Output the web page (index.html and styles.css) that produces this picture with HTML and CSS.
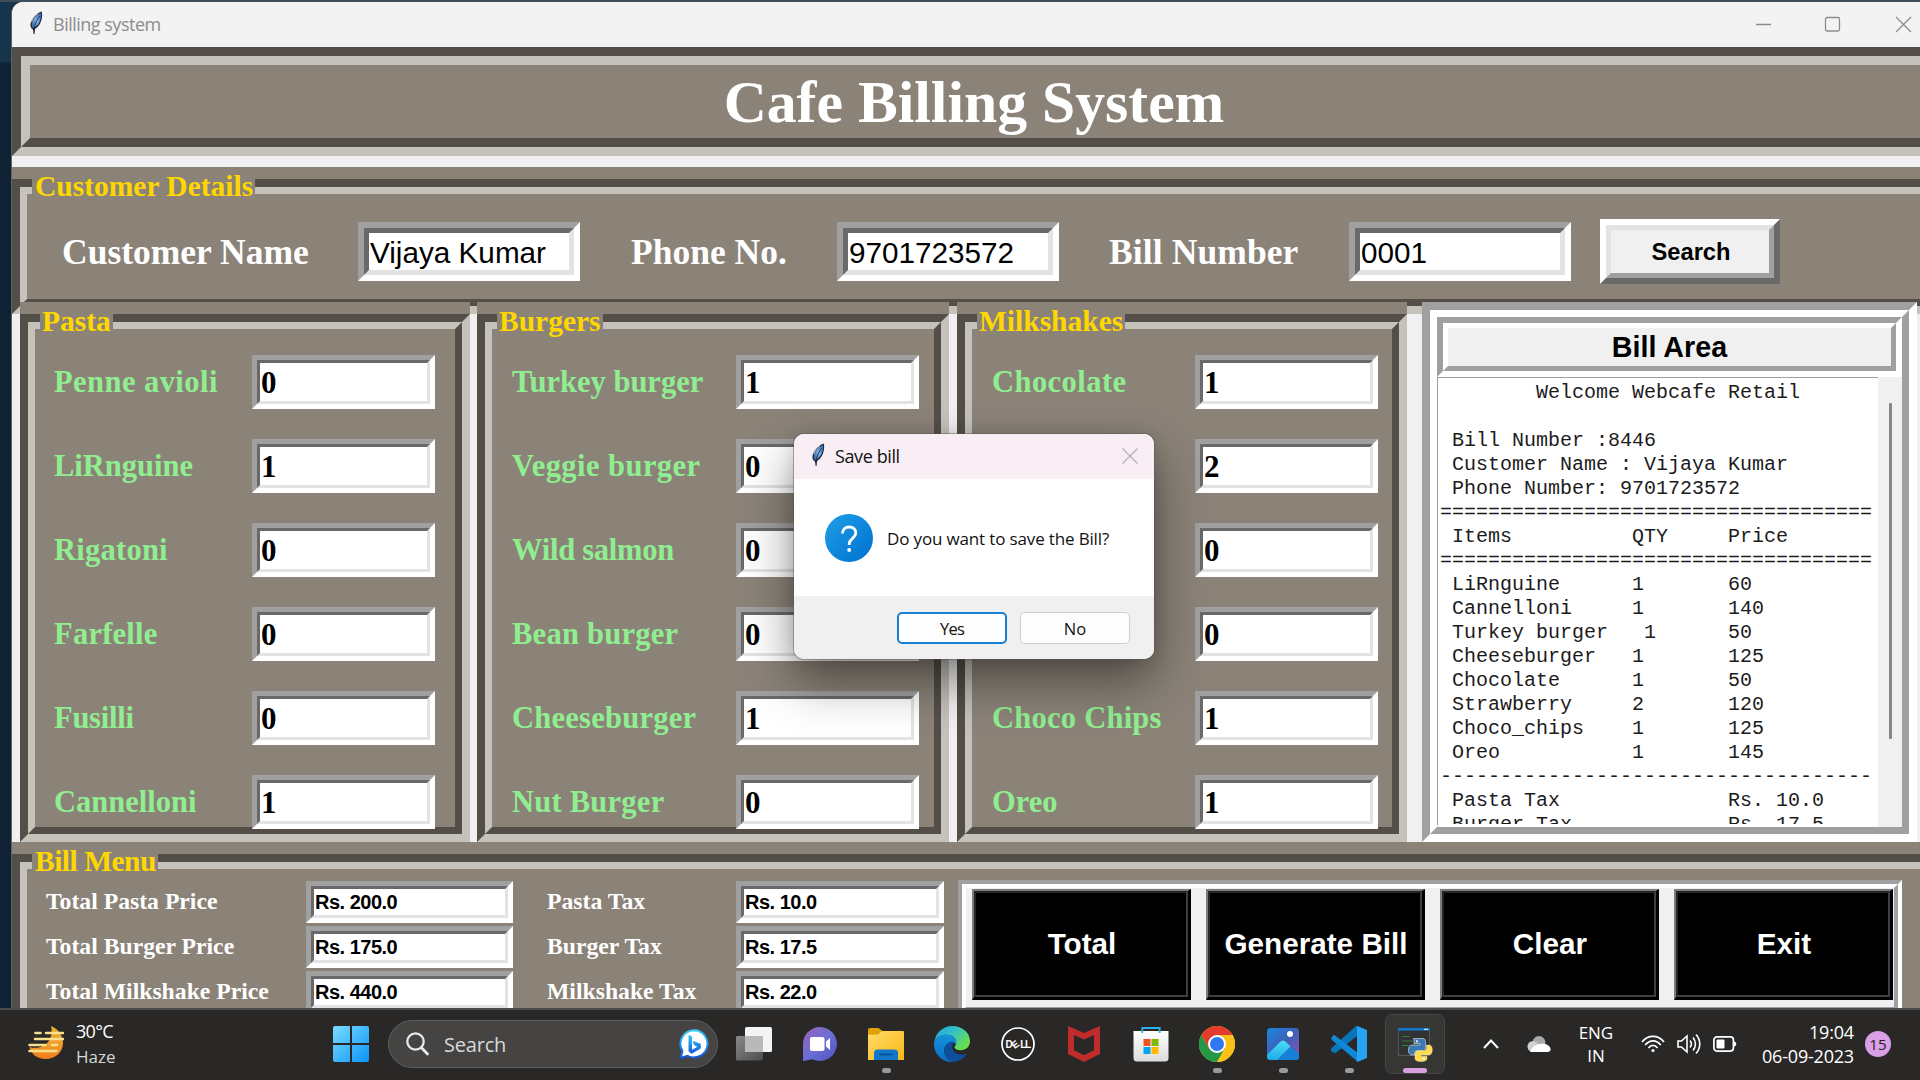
FILE: index.html
```html
<!DOCTYPE html>
<html lang="en">
<head>
<meta charset="utf-8">
<title>Billing system</title>
<link rel="stylesheet" href="styles.css">
</head>
<body>
<svg width="0" height="0" class="defs">
  <defs>
    <linearGradient id="gFeather" x1="1" y1="0" x2="0" y2="1"><stop offset="0" stop-color="#2a5fb0"/><stop offset=".5" stop-color="#7fb2ec"/><stop offset="1" stop-color="#2a559c"/></linearGradient>
    <linearGradient id="gQuestion" x1="0" y1="0" x2="1" y2="1"><stop offset="0" stop-color="#1f9fe6"/><stop offset="1" stop-color="#0070d0"/></linearGradient>
    <linearGradient id="gMoon" x1="0" y1="0" x2="0" y2="1"><stop offset="0" stop-color="#e0b030"/><stop offset=".5" stop-color="#f0a02c"/><stop offset="1" stop-color="#f07d1c"/></linearGradient>
    <linearGradient id="gWin" x1="0" y1="0" x2="1" y2="1"><stop offset="0" stop-color="#7bdcff"/><stop offset="1" stop-color="#0a94f8"/></linearGradient>
    <linearGradient id="gBing" x1="0" y1="0" x2="0" y2="1"><stop offset="0" stop-color="#35c8f5"/><stop offset="1" stop-color="#1256d8"/></linearGradient>
    <linearGradient id="gChat" x1="0" y1="0" x2="1" y2="1"><stop offset="0" stop-color="#9a63b4"/><stop offset=".5" stop-color="#6b6fd6"/><stop offset="1" stop-color="#4f53c4"/></linearGradient>
    <linearGradient id="gFolder" x1="0" y1="0" x2="1" y2="1"><stop offset="0" stop-color="#ffda68"/><stop offset="1" stop-color="#f9b916"/></linearGradient>
    <linearGradient id="gEdgeTop" x1="0" y1="0" x2="1" y2=".6"><stop offset="0" stop-color="#1f9fe6"/><stop offset=".5" stop-color="#35c1c8"/><stop offset="1" stop-color="#69e04c"/></linearGradient>
    <linearGradient id="gEdgeLow" x1="0" y1="0" x2="0" y2="1"><stop offset="0" stop-color="#1593dc"/><stop offset="1" stop-color="#0c6cc4"/></linearGradient>
    <linearGradient id="gPhoto" x1="0" y1="0" x2="1" y2="1"><stop offset="0" stop-color="#1a86e0"/><stop offset=".5" stop-color="#3f5fb8"/><stop offset="1" stop-color="#9a4fb4"/></linearGradient>
    <linearGradient id="gPeak" x1="0" y1="0" x2="0" y2="1"><stop offset="0" stop-color="#4fdcf6"/><stop offset="1" stop-color="#12a4e4"/></linearGradient>
    <linearGradient id="gTask" x1="0" y1="0" x2="1" y2="1"><stop offset="0" stop-color="#8a8a8a"/><stop offset="1" stop-color="#4c4c4c"/></linearGradient>
    <linearGradient id="gStore" x1="0" y1="0" x2="0" y2="1"><stop offset="0" stop-color="#ffffff"/><stop offset="1" stop-color="#dcdcdc"/></linearGradient>
    <symbol id="feather" viewBox="0 0 14 24">
      <path d="M12.600.600C8 2 3 7 1.600 12.500 1 15.500 2 17.500 4 18.500L4.600 23 5.600 23 6 18C9.500 16 12 12 12.800 7.500 13.200 5 13.400 2.500 12.600.600z" fill="#222c3c"/>
      <path d="M12 2C8 4 4 8 3 12.500 2.700 14.500 3 16 4 17 7.500 16 10.500 12 11.400 8 11.900 5.500 12.200 4 12 2z" fill="url(#gFeather)"/>
      <path d="M10.500 5C8 9 5.500 13 5 20" fill="none" stroke="#10203a" stroke-width=".8"/>
      <path d="M2.600 11C4 7.500 6 5 9 2.800" fill="none" stroke="#c9ced4" stroke-width=".9"/>
    </symbol>
  </defs>
</svg>

<main class="window">
  <header class="titlebar">
    <svg class="feather" width="14" height="24"><use href="#feather"/></svg>
    <span class="title">Billing system</span>
    <svg class="controls" width="160" height="20" viewBox="0 0 160 20" fill="none" stroke="#8c8c8c" stroke-width="1.300">
      <path d="M1 10.500h15"/><rect x="70.500" y="3.500" width="14" height="13.500" rx="1.500"/><path d="M141 3l15 15M156 3l-15 15"/>
    </svg>
  </header>

  <section class="banner"><div class="banner-in">Cafe Billing System</div></section>

  <section class="group customer">
    <h2 class="legend">Customer Details</h2>
    <div class="groove"><div class="groove-in customer-row">
      <span class="name-label first">Customer Name</span>
      <div class="entry big"><span>Vijaya Kumar</span></div>
      <span class="name-label phone">Phone No.</span>
      <div class="entry big"><span>9701723572</span></div>
      <span class="name-label bill">Bill Number</span>
      <div class="entry big"><span>0001</span></div>
      <div class="search-btn"><span>Search</span></div>
    </div></div>
  </section>

  <section class="panels">
    <div class="group pasta">
      <h2 class="legend">Pasta</h2>
      <div class="groove"><div class="groove-in items">
        <span class="item wide">Penne avioli</span><div class="entry qty"><span>0</span></div>
        <span class="item">LiRnguine</span><div class="entry qty"><span>1</span></div>
        <span class="item loose">Rigatoni</span><div class="entry qty"><span>0</span></div>
        <span class="item loose">Farfelle</span><div class="entry qty"><span>0</span></div>
        <span class="item tight">Fusilli</span><div class="entry qty"><span>0</span></div>
        <span class="item">Cannelloni</span><div class="entry qty"><span>1</span></div>
      </div></div>
    </div>
    <div class="group burgers">
      <h2 class="legend">Burgers</h2>
      <div class="groove"><div class="groove-in items">
        <span class="item">Turkey burger</span><div class="entry qty"><span>1</span></div>
        <span class="item wide">Veggie burger</span><div class="entry qty"><span>0</span></div>
        <span class="item tight">Wild salmon</span><div class="entry qty"><span>0</span></div>
        <span class="item loose">Bean burger</span><div class="entry qty"><span>0</span></div>
        <span class="item loose">Cheeseburger</span><div class="entry qty"><span>1</span></div>
        <span class="item loose">Nut Burger</span><div class="entry qty"><span>0</span></div>
      </div></div>
    </div>
    <div class="group shakes">
      <h2 class="legend">Milkshakes</h2>
      <div class="groove"><div class="groove-in items">
        <span class="item wide">Chocolate</span><div class="entry qty"><span>1</span></div>
        <span class="item"></span><div class="entry qty"><span>2</span></div>
        <span class="item"></span><div class="entry qty"><span>0</span></div>
        <span class="item"></span><div class="entry qty"><span>0</span></div>
        <span class="item loose">Choco Chips</span><div class="entry qty"><span>1</span></div>
        <span class="item">Oreo</span><div class="entry qty"><span>1</span></div>
      </div></div>
    </div>
    <div class="bill-area"><div class="bill-in">
      <div class="bill-head"><div class="bill-head-in">Bill Area</div></div>
      <div class="bill-body">
<pre class="receipt">        Welcome Webcafe Retail

 Bill Number :8446
 Customer Name : Vijaya Kumar
 Phone Number: 9701723572
====================================
 Items          QTY     Price
====================================
 LiRnguine      1       60
 Cannelloni     1       140
 Turkey burger   1      50
 Cheeseburger   1       125
 Chocolate      1       50
 Strawberry     2       120
 Choco_chips    1       125
 Oreo           1       145
------------------------------------
 Pasta Tax              Rs. 10.0
 Burger Tax             Rs. 17.5</pre>
        <div class="scrollbar"><div class="thumb"></div></div>
      </div>
    </div></div>
  </section>

  <section class="group menu">
    <h2 class="legend">Bill Menu</h2>
    <div class="groove"><div class="groove-in menu-row">
      <div class="totals">
        <span class="total">Total Pasta Price</span><div class="entry sum"><span>Rs. 200.0</span></div>
        <span class="total tax">Pasta Tax</span><div class="entry sum"><span>Rs. 10.0</span></div>
        <span class="total">Total Burger Price</span><div class="entry sum"><span>Rs. 175.0</span></div>
        <span class="total tax">Burger Tax</span><div class="entry sum"><span>Rs. 17.5</span></div>
        <span class="total">Total Milkshake Price</span><div class="entry sum"><span>Rs. 440.0</span></div>
        <span class="total tax">Milkshake Tax</span><div class="entry sum"><span>Rs. 22.0</span></div>
      </div>
      <div class="actions"><div class="actions-in">
        <div class="action"><span>Total</span></div>
        <div class="action"><span>Generate Bill</span></div>
        <div class="action"><span>Clear</span></div>
        <div class="action"><span>Exit</span></div>
      </div></div>
    </div></div>
  </section>
</main>

<div class="dialog">
  <div class="dialog-title">
    <svg width="14" height="24"><use href="#feather"/></svg>
    <span>Save bill</span>
    <svg class="dialog-close" width="16" height="16" viewBox="0 0 16 16" stroke="#b9b2b6" stroke-width="1.400"><path d="M.500.500l15 15M15.500.500l-15 15"/></svg>
  </div>
  <div class="dialog-body">
    <svg width="48" height="48" viewBox="0 0 48 48"><circle cx="24" cy="24" r="24" fill="url(#gQuestion)"/><path d="M17.500 19.500c0-4 2.800-6.500 6.700-6.500s6.600 2.400 6.600 6c0 5.200-6.600 5.500-6.600 11v1" fill="none" stroke="#fff" stroke-width="2.800"/><circle cx="24.200" cy="36" r="2" fill="#fff"/></svg>
    <span>Do you want to save the Bill?</span>
  </div>
  <div class="dialog-foot"><div class="dbtn yes">Yes</div><div class="dbtn">No</div></div>
</div>

<footer class="taskbar">
  <div class="weather">
    <svg width="36" height="34" viewBox="0 0 36 34"><path d="M23 0c7 3 12 9 12 17 0 9-7.500 16-17.500 16C9 33 3 28 1.500 21c9 3 19.500-2 21.500-11 .8-3.500.800-7 0-10z" fill="url(#gMoon)"/><path d="M7.500 7h5M18 7h17M7 13h28M1.500 19h16M24 19h5M1.500 25h27" stroke="#f8df8c" stroke-width="2.600" stroke-linecap="round"/></svg>
    <div class="weather-text"><span class="temp">30°C</span><span class="haze">Haze</span></div>
  </div>
  <svg class="start" width="36" height="36" viewBox="0 0 36 36"><path d="M2 0h15v17H0V2a2 2 0 0 1 2-2zM19 0h15a2 2 0 0 1 2 2v15H19zM0 19h17v17H2a2 2 0 0 1-2-2zM19 19h17v15a2 2 0 0 1-2 2H19z" fill="url(#gWin)"/></svg>
  <div class="search">
    <svg width="23" height="24" viewBox="0 0 23 24" fill="none" stroke="#e8e8e8" stroke-width="2.300"><circle cx="9.500" cy="9.500" r="8.200"/><path d="M15.500 15.800l6 6.200" stroke-linecap="round" stroke-width="2.800"/></svg>
    <span>Search</span>
    <svg class="bing" width="30" height="30" viewBox="0 0 30 30"><path d="M15 1.200a13.600 13.600 0 1 1-6.500 25.600L1.500 29l2-7A13.600 13.600 0 0 1 15 1.200z" fill="#fff" stroke="url(#gBing)" stroke-width="2"/><path d="M10 6.500l2.500 1v14l6.800-3.600-4-2.200-1-3.200 7 2.600v4.200l-8.800 5-2.500-2z" fill="url(#gBing)" stroke="url(#gBing)" stroke-width="1" stroke-linejoin="round"/></svg>
  </div>
  <div class="apps">
    <div class="app"><svg viewBox="0 0 36 36"><rect x="9" y="1" width="27" height="25" rx="1.500" fill="#f4f4f4"/><rect x="0" y="10" width="27" height="24.500" rx="1.500" fill="url(#gTask)"/><rect x="9" y="10" width="18" height="16" fill="#b9b9b9"/></svg></div>
    <div class="app"><svg viewBox="0 0 36 36"><path d="M18 1a17 17 0 1 1-7.500 32.300L1 35V19A17 17 0 0 1 18 1z" fill="url(#gChat)"/><rect x="8" y="11" width="14.500" height="14" rx="2" fill="#fff"/><path d="M24 15.500l4-3.500v12l-4-3.500z" fill="#fff"/></svg></div>
    <div class="app open"><svg viewBox="0 0 36 36"><path d="M0 4a2 2 0 0 1 2-2h8.500l4 3v5H0z" fill="#e0a008"/><path d="M0 8.500h10l4-3.500H35a1 1 0 0 1 1 1v28H0z" fill="url(#gFolder)"/><path d="M6 34v-7a3.500 3.500 0 0 1 3.500-3.500h17A3.500 3.500 0 0 1 30 27v7z" fill="#1277c8"/><path d="M12 28.500h12" stroke="#0b4a8a" stroke-width="1.600" stroke-linecap="round"/></svg></div>
    <div class="app"><svg viewBox="0 0 36 36"><path d="M.300 16C1.500 7 8.500 0 18.500 0 28.500 0 36 7 36 15.200c0 5.200-4 9-9 9-4 0-6.500-1.500-6.500-3 0-1.200 1.700-1.800 1.700-5 0-4-4-7.500-9.500-7.500C7 8.700 2.500 11 .300 16z" fill="url(#gEdgeTop)"/><path d="M.200 16C2.500 11 7 8.700 12.700 8.700c5.500 0 9.500 3.200 9.500 7.300 0 .8-.100 1.400-.300 2C15 13.500 9 20 10.500 27c.8 4 4 7.600 8.500 9C8 36.600 0 28 0 18.500z" fill="url(#gEdgeLow)"/><path d="M10.400 27C9 20 14 14.500 20 16c-4.500 5.500-.500 12.500 7.500 12.500 2 0 3.600-.500 5.500-1.500-3 5.500-8.500 9-14 9-4.500-1.500-7.800-5-8.600-9z" fill="#0d4f9c"/></svg></div>
    <div class="app"><svg viewBox="0 0 36 36"><circle cx="18" cy="18" r="16" fill="none" stroke="#fff" stroke-width="1.700"/><text x="5.500" y="21.500" class="dell">D</text><text x="0" y="0" class="dell" transform="translate(14.800 23.200) rotate(-38)">E</text><text x="20.200" y="21.500" class="dell">L</text><text x="25" y="21.500" class="dell">L</text></svg></div>
    <div class="app"><svg viewBox="0 0 36 36"><path d="M2 0l16 7 16-7v28l-16 8-16-8zM8 9v15.300l10 5 10-5V9l-10 4.600z" fill="#c02c2c" fill-rule="evenodd"/></svg></div>
    <div class="app"><svg viewBox="0 0 36 36"><path d="M.500 5h35v27a3.500 3.500 0 0 1-3.500 3.500H4A3.500 3.500 0 0 1 .500 32z" fill="url(#gStore)"/><path d="M9.300 7V2h17.400v5" fill="none" stroke="#26b0ee" stroke-width="1.800"/><path d="M10.500 13h7v7h-7z" fill="#f25022"/><path d="M18.500 13h7v7h-7z" fill="#7fba00"/><path d="M10.500 21h7v7h-7z" fill="#00a4ef"/><path d="M18.500 21h7v7h-7z" fill="#ffb900"/></svg></div>
    <div class="app open"><svg viewBox="0 0 36 36"><circle cx="18" cy="18" r="18" fill="#fbc116"/><path d="M2.400 9A18 18 0 0 1 33.600 9H18z" fill="#e33b2e"/><path d="M2.400 9a18 18 0 0 0 15.600 27l7.800-13.500L18 18 10.200 22.500z" fill="#249847"/><path d="M2.400 9L10.200 22.500 18 9z" fill="#e33b2e"/><path d="M33.600 9H18l7.800 13.500L18 36A18 18 0 0 0 33.600 9z" fill="#fbc116"/><circle cx="18" cy="18" r="9" fill="#fff"/><circle cx="18" cy="18" r="7" fill="#3078ee"/></svg></div>
    <div class="app open"><svg viewBox="0 0 36 36"><clipPath id="cp"><rect x="2" y="2" width="32" height="32" rx="3.500"/></clipPath><g clip-path="url(#cp)"><rect x="2" y="2" width="32" height="32" fill="url(#gPhoto)"/><path d="M8 38l16-16 3-1 10 10v8z" fill="#1580d6"/><path d="M0 31l15-15c2-2 4-2 6 0l4.500 4.500L8 38z" fill="url(#gPeak)"/></g><circle cx="25" cy="8" r="3" fill="#fff"/></svg></div>
    <div class="app open"><svg viewBox="0 0 36 36"><path d="M26 0v10L4 27.500 0 25v-2.500L25 0z" fill="#0a74b8"/><path d="M0 12l3-3.200L27 27v9L1 14z" fill="#1088d8"/><path d="M26 0l10 4v28l-10 4z" fill="#27a3f4"/></svg></div>
    <div class="app active"><svg viewBox="0 0 36 36"><rect x="1.500" y="2.500" width="31" height="27" fill="#303234" stroke="#55585a"/><path d="M1 2h32v2.600H1z" fill="#1475c8"/><path d="M27 3.300h4" stroke="#fff" stroke-width="1"/><path d="M5 10.500h8M5 15h11M5 19.500h7" stroke="#2f7d34" stroke-width="1.200"/><path d="M16.500 12.500h9c2 0 3 1.200 3 3v6c0 2-1 3-3 3h-5c-2 0-3 1-3 3v1.500h-2.500c-2.500 0-3.500-2-3.500-5s1.200-5 3.500-5h8v-1.500h-6v-3z" fill="#3b7ab5" stroke="#e8e8e8" stroke-width=".6"/><path d="M29.500 19H32c2.400 0 3.300 2 3.300 5s-1.200 5-3.500 5H24v1.300h6v2c0 2-1.500 3.200-6 3.200s-6-1.200-6-3.200v-4.500c0-2 1-3 3-3h5.500c2 0 3-1.200 3-3z" fill="#ffdc4e" stroke="#e8e8e8" stroke-width=".4"/><circle cx="20" cy="15.300" r="1.100" fill="#fff"/><circle cx="26.500" cy="32.500" r="1.100" fill="#fff"/></svg></div>
  </div>
  <div class="tray">
    <svg class="chev" width="16" height="12" viewBox="0 0 16 12" fill="none" stroke="#fff" stroke-width="2"><path d="M1 10l7-7.500 7 7.500"/></svg>
    <svg class="cloud" width="24" height="18" viewBox="0 0 24 18"><circle cx="12" cy="7.500" r="6.500" fill="#a9a9a9"/><circle cx="6" cy="11.500" r="5.500" fill="#cfcfcf"/><path d="M3 16.500C5 12 9 9.500 12 9c5-.500 7-.500 10 2 2.500 2.500 2 6-1.500 6H6c-1.200 0-2 0-3-.500z" fill="#fff"/></svg>
    <div class="lang"><span>ENG</span><span>IN</span></div>
    <svg class="wifi" width="24" height="20" viewBox="0 0 24 20" fill="none" stroke="#fff" stroke-width="1.700"><path d="M1 8c6-7.500 16-7.500 22 0M4.200 11c4.400-5.600 11.200-5.600 15.600 0M7.500 14c2.600-3.500 6.400-3.500 9 0"/><circle cx="12" cy="16.500" r="1.600" fill="#fff" stroke="none"/></svg>
    <svg class="vol" width="24" height="22" viewBox="0 0 24 22" fill="none" stroke="#fff" stroke-width="1.600"><path d="M1 8v6h3.500l5.500 5V3L4.500 8z"/><path d="M13 7.500c1.600 2 1.600 5 0 7M16 4.500c3.200 3.800 3.200 9.200 0 13M19 1.500c5 5.500 5 13.500 0 19"/></svg>
    <svg class="batt" width="24" height="16" viewBox="0 0 24 16"><rect x=".900" y=".900" width="19.500" height="14.200" rx="3" fill="none" stroke="#fff" stroke-width="1.700"/><rect x="3.500" y="3.500" width="8" height="9" rx="1" fill="#fff"/><path d="M21 5.500c3 .5 3 4.500 0 5z" fill="#fff"/></svg>
    <div class="clock"><span>19:04</span><span>06-09-2023</span></div>
    <div class="badge">15</div>
  </div>
</footer>
</body>
</html>
```
FILE: styles.css
```css
* { box-sizing: border-box; }

body {
  margin: 0;
  width: 1920px;
  height: 1080px;
  overflow: hidden;
  position: relative;
  background: linear-gradient(#16344a 0 62px, #0f2233 63px);
  border-top: 2px solid #3f505c;
  font-family: "Open Sans", "Noto Sans", sans-serif;
}

.defs { display: block; position: absolute; }

/* ---- application window ---- */
.window {
  margin-left: 11px;
  width: 1909px;
  height: 1006px;
  overflow: hidden;
  background: #f0f0f0;
  border-left: 1px solid #59636a;
  border-top-left-radius: 12px;
}

.titlebar {
  height: 45px;
  background: #f3f3f3;
  display: flex;
  align-items: center;
  padding: 0 0 2px 17px;
}
.titlebar .feather { margin-top: -2px; }
.title {
  margin-left: 10px;
  font-size: 18px;
  letter-spacing: -0.5px;
  color: #8c8c8c;
}
.controls { margin-left: auto; margin-right: 5px; }

.banner {
  width: 1926px;
  height: 109px;
  margin-bottom: 11px;
  border: 9px solid;
  border-color: #534f48 #c5c1bb #c5c1bb #534f48;
}
.banner-in {
  height: 91px;
  border: 9px solid;
  border-color: #c5c1bb #534f48 #534f48 #c5c1bb;
  background: #8b8378;
  color: #fff;
  font: bold 59.700px/74px "Liberation Serif", serif;
  text-align: center;
  padding-right: 2px;
}

/* label frames */
.group {
  position: relative;
  background: #8b8378;
  padding-top: 12px;
  display: flex;
  flex: none;
}
.groove {
  flex: 1;
  display: flex;
  border: 8px solid;
  border-color: #534f48 #c5c1bb #c5c1bb #534f48;
}
.groove-in {
  flex: 1;
  border: 7px solid;
  border-color: #c5c1bb #534f48 #534f48 #c5c1bb;
}
.legend {
  position: absolute;
  left: 20px;
  top: 4px;
  margin: 0;
  padding: 0 2px 0 3px;
  background: #8b8378;
  color: gold;
  font: bold 29.500px/30px "Liberation Serif", serif;
}
.panels .legend { padding-left: 2px; }
.menu .legend { letter-spacing: -0.5px; }

/* sunken text entries */
.entry {
  border: 5px solid;
  border-color: #a0a0a0 #fff #fff #a0a0a0;
  display: flex;
}
.entry span {
  flex: 1;
  border: 3px solid;
  border-color: #696969 #e3e3e3 #e3e3e3 #696969;
  background: #fff;
  color: #000;
  white-space: nowrap;
}

.customer { width: 1926px; height: 147px; }
.customer-row { display: flex; align-items: center; padding: 10px 0 0 35px; }
.name-label { color: #fff; font: bold 35.500px/40px "Liberation Serif", serif; }
.name-label.first { width: 296px; }
.name-label.phone { width: 257px; padding-left: 51px; }
.name-label.bill { width: 290px; padding-left: 50px; letter-spacing: 0.1px; }
.entry.big { width: 222px; height: 59px; border-width: 6px; }
.entry.big span {
  border-width: 5px;
  padding-left: 1px;
  font: 29.700px/39px "Liberation Sans", sans-serif;
}
.search-btn {
  width: 180px;
  height: 65px;
  margin-left: 29px;
  border: 6px solid;
  border-color: #fff #696969 #696969 #fff;
  display: flex;
}
.search-btn span {
  flex: 1;
  border: 5px solid;
  border-color: #e3e3e3 #a0a0a0 #a0a0a0 #e3e3e3;
  background: #f0f0f0;
  color: #000;
  font: bold 23.700px/44px "Liberation Sans", sans-serif;
  text-align: center;
  padding-left: 2px;
}

.panels {
  position: relative;
  display: flex;
  height: 540px;
  margin-top: -12px;
  padding-left: 8px;
}
.pasta { width: 450px; margin-right: 7px; }
.burgers { width: 472px; margin-right: 8px; }
.shakes { width: 450px; margin-right: 15px; }

.items {
  display: grid;
  grid-auto-rows: 54px;
  row-gap: 30px;
  padding: 26px 0 0 19px;
  grid-template-columns: 198px 183px;
}
.burgers .items { grid-template-columns: 225px 183px; }
.shakes .items { padding-left: 20px; grid-template-columns: 203px 183px; }
.burgers .item { padding-left: 1px; }
.item { color: lightgreen; font: bold 30.500px/54px "Liberation Serif", serif; white-space: nowrap; }
.item.wide { letter-spacing: 0.45px; }
.item.loose { letter-spacing: 0.25px; }
.item.tight { letter-spacing: -0.25px; }
.entry.qty span { font: bold 31px/39px "Liberation Serif", serif; padding-left: 1px; }

.bill-area {
  width: 495px;
  border: 8px solid;
  border-color: #a0a0a0 #fff #fff #a0a0a0;
  display: flex;
}
.bill-in {
  flex: 1;
  border: 7px solid;
  border-color: #fff #a0a0a0 #a0a0a0 #fff;
  background: #f0f0f0;
}
.bill-head { height: 60px; border: 6px solid; border-color: #a0a0a0 #fff #fff #a0a0a0; }
.bill-head-in {
  height: 48px;
  border: 5px solid;
  border-color: #fff #a0a0a0 #a0a0a0 #fff;
  color: #000;
  font: bold 28.700px/38px "Liberation Sans", sans-serif;
  text-align: center;
}
.bill-body { height: 450px; display: flex; justify-content: space-between; }
.receipt {
  margin: 0;
  width: 441px;
  height: 450px;
  overflow: hidden;
  background: #fff;
  color: #1c1c1c;
  border: solid #a0a0a0;
  border-width: 1px 0 0 1px;
  padding: 3px 0 0 2px;
  font: 20px/24px "Liberation Mono", monospace;
  border-bottom: 3px solid #fff;
}
.scrollbar { width: 24px; display: flex; justify-content: center; padding-top: 26px; }
.thumb { width: 3px; height: 336px; background: #868686; border-radius: 1px; }

.menu { width: 1926px; height: 240px; }
.menu-row { display: flex; align-items: flex-start; }
.totals {
  display: grid;
  grid-template-columns: 279px 207px 223px 208px;
  grid-auto-rows: 42px;
  row-gap: 3px;
  padding-top: 12px;
}
.total { color: #fff; padding-left: 19px; font: bold 23.700px/41px "Liberation Serif", serif; white-space: nowrap; }
.total.tax { padding-left: 34px; }
.entry.sum span { font: bold 20px/27px "Liberation Sans", sans-serif; letter-spacing: -0.5px; padding-left: 1px; }

.actions {
  margin: 11px 0 0 14px;
  width: 944px;
  height: 135px;
  border: 4px solid;
  border-color: #a0a0a0 #fff #fff #a0a0a0;
}
.actions-in {
  height: 127px;
  border: 4px solid;
  border-color: #fff #a0a0a0 #a0a0a0 #fff;
  background: #f0f0f0;
  display: flex;
  gap: 15px;
  padding: 1px 0 0 6px;
}
.action {
  flex: none;
  width: 219px;
  height: 111px;
  border: 2px solid;
  border-color: #7c7c7c #000 #000 #7c7c7c;
  border-right-width: 3px;
  border-bottom-width: 3px;
  display: flex;
}
.action span {
  flex: 1;
  border: 2px solid;
  border-color: #262626 #404040 #404040 #262626;
  background: #000;
  color: #fff;
  font: bold 29.700px/101px "Liberation Sans", sans-serif;
  text-align: center;
  padding-left: 2px;
}

/* ---- message box ---- */
.dialog {
  position: absolute;
  left: 794px;
  top: 432px;
  width: 360px;
  height: 225px;
  border-radius: 10px;
  overflow: hidden;
  background: #fff;
  box-shadow: 0 0 0 1px rgba(90, 85, 80, .45), 0 22px 50px rgba(0, 0, 0, .45), 0 2px 16px rgba(0, 0, 0, .12);
  display: flex;
  flex-direction: column;
}
.dialog-title {
  height: 45px;
  background: #f8eef4;
  display: flex;
  align-items: center;
  padding: 0 16px 2px 17px;
  font-size: 18px;
  letter-spacing: -0.4px;
  color: #111;
}
.dialog-title span { margin-left: 10px; }
.dialog-title svg:first-child { margin-top: -2px; }
.dialog-close { margin-left: auto; }
.dialog-body {
  flex: 1;
  display: flex;
  align-items: center;
  gap: 14px;
  padding-left: 31px;
  font-size: 17px;
  letter-spacing: -0.150px;
  color: #111;
}
.dialog-body span { padding-top: 2px; }
.dialog-foot {
  height: 63px;
  background: #f0f0f0;
  display: flex;
  justify-content: flex-end;
  gap: 13px;
  padding: 16px 24px 0 0;
}
.dbtn {
  width: 110px;
  height: 32px;
  border: 1px solid #d0d0d0;
  border-radius: 5px;
  background: #fdfdfd;
  text-align: center;
  font-size: 16.500px;
  line-height: 31px;
  color: #111;
}
.dbtn.yes { border: 2px solid #1a7fd0; line-height: 29px; letter-spacing: -0.800px; }

/* ---- taskbar ---- */
.taskbar {
  height: 72px;
  background: #292827;
  border-top: 2px solid #4b4b4b;
  display: flex;
  align-items: center;
  color: #fff;
  padding: 0 0 2px 28px;
}
.weather { display: flex; width: 305px; gap: 12px; align-items: center; }
.weather svg { margin-top: -2px; }
.weather-text { display: flex; flex-direction: column; font-size: 18px; line-height: 25px; letter-spacing: -0.700px; }
.haze { color: #d6d6d6; letter-spacing: 0; font-size: 17px; }
.search {
  width: 330px;
  height: 48px;
  margin: 0 18px 0 19px;
  border-radius: 24px;
  border: 1px solid #5e5e5e;
  background: #454443;
  display: flex;
  align-items: center;
  padding: 0 8px 0 17px;
  font-size: 20px;
  letter-spacing: -0.200px;
  color: #d9d9d9;
}
.search span { margin-left: 15px; }
.bing { margin-left: auto; }
.apps { display: flex; align-items: center; }
.app {
  width: 66.100px;
  height: 60px;
  display: flex;
  flex-direction: column;
  align-items: flex-start;
}
.app svg { width: 36px; height: 36px; margin-top: 12px; }
.app.open::after, .app.active::after {
  content: "";
  width: 9px;
  height: 5px;
  margin: 6px 0 0 14px;
  border-radius: 3px;
  background: #9a9a9a;
}
.app.active {
  width: 60px;
  margin-left: -12px;
  padding-left: 11px;
  background: #363635;
  border: 1px solid #444;
  border-radius: 7px;
}
.app.active svg { margin-top: 11px; }
.app.active::after { width: 24px; margin-left: 6px; background: #d9a0e0; }
.dell { font: bold 10px "Liberation Sans", sans-serif; fill: #fff; }
.tray { display: flex; align-items: center; margin-left: 38px; flex: 1; }
.cloud { margin-left: 28px; }
.lang {
  width: 60px;
  margin-left: 15px;
  display: flex;
  flex-direction: column;
  text-align: center;
  font-size: 17px;
  line-height: 23px;
}
.wifi { margin-left: 15px; }
.vol { margin-left: 12px; }
.batt { margin-left: 12px; }
.clock {
  width: 105px;
  margin-left: 12px;
  display: flex;
  flex-direction: column;
  text-align: right;
  font-size: 18px;
  line-height: 24px;
  letter-spacing: -0.200px;
}
.badge {
  width: 26px;
  height: 26px;
  margin-left: 11px;
  border-radius: 13px;
  background: #d9a0e6;
  color: #222;
  font-size: 15px;
  line-height: 26px;
  text-align: center;
}
```
